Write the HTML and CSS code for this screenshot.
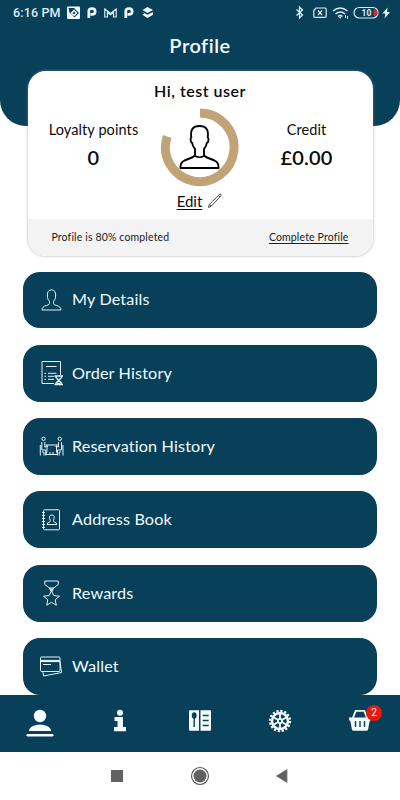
FILE: index.html
```html
<!DOCTYPE html>
<html lang="en">
<head>
<meta charset="utf-8">
<title>Profile</title>
<link rel="stylesheet" href="styles.css">
</head>
<body>
<div class="screen">
  <header class="top">
    <div class="status">
      <span class="clock">6:16 PM</span>
      <svg class="apps" width="90" height="16" viewBox="0 0 90 16">
        <rect x="1" y="1.500" width="13" height="12.500" rx="1" fill="#f2fbff"/>
        <path d="M2.500 3h5.500l5 5-4.500 4.500-5-5z" fill="#08405a"/><path d="M8 4.500l3.500 3.500L8 11.500 4.500 8z" fill="#f2fbff"/><path d="M8 6.500l1.500 1.500L8 9.500 6.500 8z" fill="#08405a"/>
        <path d="M22.800 13V6.200q0-2.700 3.200-2.700t3.200 2.900T26 9.300h-1.500" fill="none" stroke="#f2fbff" stroke-width="2.700"/>
        <path d="M38.800 12V4l5.700 4.500L50.200 4v8h-2.700V7.500l-3 2.300-3-2.300V12z" fill="none" stroke="#dcebf2" stroke-width="1.200"/>
        <path d="M59.800 13V6.200q0-2.700 3.200-2.700t3.200 2.900T63 9.300h-1.500" fill="none" stroke="#f2fbff" stroke-width="2.700"/>
        <path d="M81.500 2l5.500 3-5.500 3-5-3z" fill="#f2fbff"/><path d="M76.300 7l5.200 2.700L87 7v2.700L81.500 13l-5.200-3.300 2-1" fill="#f2fbff"/>
      </svg>
      <svg class="system" width="98" height="16" viewBox="0 0 98 16" fill="none" stroke="#dcebf2">
        <path d="M1.500 4.500l6 5.500-3 3V2l3 3-6 5.500" stroke-width="1.300"/>
        <path d="M21 3h9q1.200 0 1.200 1.200v7q0 1.200-1.200 1.200H20q-1.200 0-1.200-1.200V5.500z" stroke-width="1.200"/><path d="M23 5.500l4 4.500m0-4.500l-4 4.500" stroke-width="1.200"/>
        <path d="M38 6q7-6 14.500 0M40.500 9q5-4 9.500 0M43 11.500q2.300-2 4.500 0" stroke-width="1.500"/><circle cx="45.200" cy="12.500" r="1" fill="#dcebf2" stroke="none"/><path d="M50.500 10v3m2-2v3" stroke-width="1"/>
        <rect x="59" y="2.500" width="24" height="10.500" rx="5.200" stroke-width="1.200"/><path d="M78.500 4.500h.8a3.200 3.200 0 0 1 0 6.500h-.8z" fill="#d02a2e" stroke="none"/>
        <text x="66.500" y="11" class="battery">10</text>
        <path d="M92.500 2.500l-5 6h3l-1 5 5.500-6.500h-3z" fill="#f2fbff" stroke="none"/>
      </svg>
    </div>
    <h1>Profile</h1>
  </header>

  <main>
    <section class="card">
      <div class="summary">
        <h2>Hi, test user</h2>
        <div class="stats">
          <div class="stat"><span class="label">Loyalty points</span><b>0</b></div>
          <svg class="ring" width="80" height="80" viewBox="0 0 80 80" fill="none">
            <path d="M40 6A34.300 34.300 0 1 1 7.200 29.500" stroke="#c2a378" stroke-width="9"/>
            <path d="M20.500 61v-1.500q0-4 4-6l7.500-3q3-1.200 3-3v-5.500q-2.500-2.800-2.800-6-1.400-.5-1.600-3-.1-2 .7-2.500Q29.500 19 39.500 19t8.200 11.500q.9.500.8 2.500-.2 2.500-1.700 3-.3 3.200-2.800 6v5.500q0 1.800 3 3l7.500 3q4 2 4 6V61z" stroke="#050505" stroke-width="1.900" stroke-linejoin="round"/><path d="M35 49q4.500 2.400 9 0" stroke="#050505" stroke-width="1.500"/>
          </svg>
          <div class="stat credit"><span class="label">Credit</span><b>£0.00</b></div>
        </div>
        <div class="edit"><a>Edit</a>
          <svg width="16" height="16" viewBox="0 0 16 16" fill="none" stroke="#333" stroke-width=".9"><path d="M1.500 14.500l.9-3.200L12.600 1.400q.7-.6 1.400 0t0 1.400L4.200 13.200zM2.400 11.300l1.800 1.900M11.500 2.500l1.500 1.500"/></svg>
        </div>
      </div>
      <div class="progress"><span>Profile is 80% completed</span><a>Complete Profile</a></div>
    </section>

    <ul class="menu">
      <li><svg viewBox="0 0 26 26"><path d="M3 23q0-3.500 4.500-4.500 3-.7 3-2v-2q-1.700-2-2-4Q7.500 2.800 12.500 2.800t4 7.700q-.3 2-2 4v2q0 1.300 3 2 4.500 1 4.500 4.500z"/></svg><span>My Details</span></li>
      <li><svg viewBox="0 0 26 26"><path d="M15 23.500H3v-22h18.500V15M7 6.500h10.500M5.500 13.300H7M9 13.300h8.500M5.500 16.300H7M9 16.300h6M5.500 19.300H7M9 19.300h6"/><path d="M15.500 16h8.500M15.500 24.500h8.500M17 16v1.500l2.700 2.700L17 23v1.500M22.500 16v1.500l-2.800 2.700 2.800 2.800v1.500M18 23.500h3.500" stroke-width="1.300"/></svg><span>Order History</span></li>
      <li><svg viewBox="0 0 26 26"><circle cx="4.500" cy="4.800" r="1.700"/><circle cx="20.800" cy="4.800" r="1.700"/><path d="M2.800 8v8h4v5.500M1.300 11v10.500M3 18h2v3.500M5.800 8v5l3-.5M22.500 8v8h-4v5.500M24 11v10.500M22.200 18h-2v3.500M19.500 8v5l-3-.5M6.500 11h12.300M8 11v6l-1.200 4M17.500 11v6l1.200 4M7 20.500h11.500M11 20.500V18M14 20.500V18"/></svg><span>Reservation History</span></li>
      <li><svg viewBox="0 0 26 26"><rect x="4.500" y="2.800" width="16" height="20" rx="1"/><path d="M3 5.500h3M3 8.500h3M3 11.500h3M3 14.500h3M3 17.500h3M3 20.500h3"/><path d="M8 17.500q0-2 2.500-2.500 1.200-.4.800-1.500Q9 8 12.800 8t1.700 5.500q-.4 1.100.8 1.500 2.500.5 2.500 2.500z"/></svg><span>Address Book</span></li>
      <li><svg viewBox="0 0 26 26"><path d="M5.800 1h13.500v3.500L14.800 8h-4.500L5.800 4.500zM10.300 8l2.200 3.500L14.800 8M10.300 8l4 2.500M14.800 8l-4 2.500"/><path d="M12.500 10.500l2.200 5 5.800.7-4.300 3.600 1.100 5.400-4.800-2.800-4.800 2.800 1.100-5.400-4.300-3.600 5.800-.7z"/></svg><span>Rewards</span></li>
      <li><svg viewBox="0 0 26 26"><rect x="1.500" y="4" width="19.500" height="14.500" rx="1"/><path d="M1.500 8h19.500" stroke-width="2.200"/><path d="M4 11.500h8M3.800 18.500l.8 4.500 18-3.500-1.700-11"/></svg><span>Wallet</span></li>
    </ul>
  </main>

  <nav class="tabs">
    <svg viewBox="0 0 40 40"><circle cx="20" cy="14" r="6.200"/><path d="M9 29q0-3 4-5 3-1.500 7-1.500t7 1.500q4 2 4 5z"/><rect x="6.500" y="32" width="27" height="2.600" rx="1.300"/></svg>
    <svg viewBox="0 0 40 40"><circle cx="20" cy="10.700" r="3"/><path d="M14.500 15H23v10h3v4.300H14V25h3.500v-6h-3z"/></svg>
    <svg viewBox="0 0 40 40"><path d="M10 8.200h9v20.500h-9q-1 0-1-1V9.200q0-1 1-1zM20.500 8.200H30q1 0 1 1v18.500q0 1-1 1h-9.500z"/><ellipse cx="14.200" cy="13.500" rx="2.400" ry="3.200" class="cut"/><path d="M14.200 15v10M22.700 13.500h6M22.700 18.500h6M22.700 23.500h6" class="line"/></svg>
    <svg viewBox="0 0 40 40"><circle cx="20" cy="19" r="10" fill="none" stroke="#f5fcff" stroke-width="2.300" stroke-dasharray="2.200 1.727"/><circle cx="20" cy="19" r="8" fill="none" stroke="#f5fcff" stroke-width="2.400"/><path d="M20 11v16M13 15l14 8M13 23l14-8" stroke="#f5fcff" stroke-width="1.800"/><circle cx="20" cy="19" r="3"/><circle cx="20" cy="19" r="1.200" class="cut"/></svg>
    <div class="basket"><svg viewBox="0 0 40 40"><path d="M12.500 17l3.200-8.200h8.600l3.200 8.200" fill="none" stroke="#f5fcff" stroke-width="1.800"/><path d="M9 15.500h22v3h-1.200l-1.800 9q-.3 1.300-1.500 1.300h-13q-1.200 0-1.500-1.300l-1.800-9H9z"/><path d="M15.500 19v6M20 19v6M24.500 19v6" class="line"/></svg><span class="badge">2</span></div>
  </nav>

  <footer class="system-nav">
    <svg viewBox="0 0 30 30"><path d="M9 9h12v12H9z"/></svg>
    <svg viewBox="0 0 30 30"><circle cx="15" cy="15" r="8.500" fill="none" stroke="#555" stroke-width="1.100"/><circle cx="15" cy="15" r="6.500"/></svg>
    <svg viewBox="0 0 30 30"><path d="M8 15l11.300-7v14z"/></svg>
  </footer>
</div>
</body>
</html>
```
FILE: styles.css
```css
* { box-sizing: border-box; }
body { margin: 0; font-family: Lato, "Liberation Sans", sans-serif; color: #0a0a0a; background: #fff; }
.screen { width: 400px; height: 800px; display: flex; flex-direction: column; overflow: hidden; }
.top { flex: none; height: 126px; background: #08405a; border-radius: 0 0 26px 26px; color: #f5fcff; }
.status { height: 26px; padding: 5px 7px 0 13px; display: flex; align-items: flex-start; }
.clock { width: 53px; font: 500 12.5px/16px Roboto, sans-serif; letter-spacing: .15px; color: #dcebf2; white-space: nowrap; }
.apps { flex: none; }
.system { flex: none; margin-left: auto; }
.battery { font: 700 8.5px Roboto, sans-serif; fill: #dcebf2; stroke: none; }
h1 { margin: 6px 0 0; text-align: center; font-size: 20px; line-height: 26px; font-weight: 600; letter-spacing: .5px; }
main { flex: 1; min-height: 0; margin-top: -55px; }
.card { width: 345px; height: 185px; margin: 0 auto; border-radius: 18px; overflow: hidden; background: #fff; box-shadow: 0 0 3px rgba(130,140,145,.75); }
.summary { height: 148px; padding-top: 10px; }
h2 { margin: 0; text-align: center; font-size: 16px; line-height: 20px; font-weight: 600; letter-spacing: .5px; }
.stats { display: flex; align-items: center; height: 87px; justify-content: space-between; padding: 4px 11px 0; }
.stat { width: 110px; display: flex; flex-direction: column; align-items: center; margin-top: -5px; }
.label { font-size: 14.500px; line-height: 20px; letter-spacing: .1px; white-space: nowrap; }
.stat b { font-size: 20px; line-height: 24px; margin-top: 5px; font-weight: 600; letter-spacing: .2px; }
.ring { flex: none; }
.edit { display: flex; justify-content: center; align-items: center; gap: 5px; height: 26px; }
.edit a, .progress a { text-decoration: underline; text-underline-offset: 1.500px; text-decoration-thickness: 1px; }
.edit a { font-size: 15px; }
.progress { height: 37px; display: flex; align-items: center; justify-content: space-between; padding: 0 24px 2px; background: #f3f3f3; font-size: 10.500px; letter-spacing: .15px; color: #222; }
.menu { list-style: none; margin: 15.500px 23px 0; padding: 0; display: grid; gap: 16.400px; }
.menu li { height: 56.900px; border-radius: 17px; background: #08405a; color: #f1faff; display: flex; align-items: center; gap: 7px; padding-left: 16px; font-size: 16.200px; letter-spacing: .15px; }
.menu span { padding-bottom: 2px; }
.menu svg { width: 26px; height: 26px; fill: none; stroke: #e3f1f7; stroke-width: 1; stroke-linejoin: round; }
.tabs { position: relative; flex: none; height: 57px; padding-top: 7px; background: #08405a; display: grid; grid-template-columns: repeat(5, 1fr); justify-items: center; }
.tabs svg { display: block; width: 40px; height: 40px; fill: #f5fcff; }
.tabs .cut { fill: #08405a; }
.tabs .line { fill: none; stroke: #08405a; stroke-width: 1.400; }
.basket { position: relative; }
.badge { position: absolute; left: 26px; top: 3px; width: 16px; height: 16px; border-radius: 50%; background: #e6190c; color: #fff; font: 10px/16px Roboto, sans-serif; text-align: center; }
.system-nav { flex: none; height: 48px; background: #fff; display: flex; justify-content: center; align-items: center; gap: 53px; }
.system-nav svg { width: 30px; height: 30px; fill: #626262; }
```
